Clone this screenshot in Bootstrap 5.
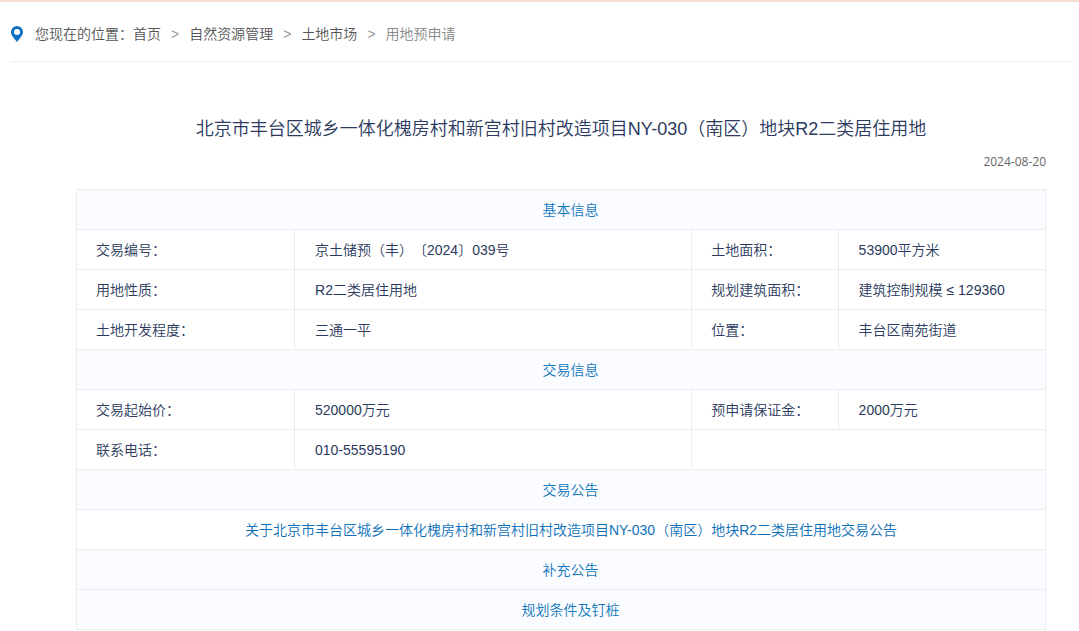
<!DOCTYPE html>
<html lang="zh-CN">
<head>
<meta charset="utf-8">
<meta name="viewport" content="width=device-width, initial-scale=1">
<title>用地预申请</title>
<link href="https://cdn.jsdelivr.net/npm/bootstrap@5.3.0/dist/css/bootstrap.min.css" rel="stylesheet">
<style>
  body { font-family: "Liberation Sans", "Noto Sans CJK SC", sans-serif; font-size: 14px; font-weight: 350; line-height: 20px; text-spacing-trim: space-all; color: #2b3a5e; background: #fff; }
  .top-band { height: 2px; background: #f6dbd2; }
  .page-wrap { padding: 0 8px 0 11px; }
  .location-bar { height: 60px; padding: 10px 0 5px; border-bottom: 1px solid #eee; color: #555; }
  .location-bar a { color: #555; }
  .location-bar .pin { margin-right: 12px; }
  .crumbs { --bs-breadcrumb-item-padding-x: 10px; --bs-breadcrumb-divider: ">"; --bs-breadcrumb-divider-color: #999; --bs-breadcrumb-item-active-color: #888; font-size: 14px; }
  .article { padding: 55px 25px 0 65px; }
  .article h1 { font-size: 18px; font-weight: 350; line-height: 24px; margin-bottom: 12px; }
  .pub-date { font-family: "Open Sans", "Noto Sans", sans-serif; font-size: 12px; font-weight: 400; line-height: 18px; color: #666; margin-bottom: 18px; }
  .info { --bs-table-color: #2b3a5e; --bs-table-bg: transparent; --bs-table-border-color: #ececee; table-layout: fixed; border-collapse: collapse; color: #2b3a5e; }
  .info > tbody > tr > * { height: 40px; padding: 0 0 0 20px; font-weight: 350; vertical-align: middle; }
  .info > tbody > tr > th { padding-left: 19px; }
  .info a { color: #0d6fb8; }
  .info > tbody > tr.section > th { background: #fafcff; color: #1277bd; text-align: center; }
  .c1 { width: 22.5%; } .c2 { width: 41%; } .c3 { width: 15.1%; }
</style>
</head>
<body>
<div class="top-band"></div>
<div class="page-wrap">
  <nav class="location-bar d-flex align-items-center" aria-label="breadcrumb">
    <svg class="pin" width="12" height="16" viewBox="0 0 12 16" aria-hidden="true"><path fill="#0d70c0" fill-rule="evenodd" d="M6 0a6 6 0 0 0-6 6c0 3.500 3.500 6.500 6 10 2.500-3.500 6-6.500 6-10a6 6 0 0 0-6-6Zm0 3a3 3 0 1 1 0 6 3 3 0 0 1 0-6Z"/></svg>
    <span>您现在的位置：</span>
    <ol class="breadcrumb crumbs mb-0">
      <li class="breadcrumb-item"><a class="text-decoration-none" href="#">首页</a></li>
      <li class="breadcrumb-item"><a class="text-decoration-none" href="#">自然资源管理</a></li>
      <li class="breadcrumb-item"><a class="text-decoration-none" href="#">土地市场</a></li>
      <li class="breadcrumb-item active" aria-current="page">用地预申请</li>
    </ol>
  </nav>
  <main class="article">
    <h1 class="text-center">北京市丰台区城乡一体化槐房村和新宫村旧村改造项目NY-030（南区）地块R2二类居住用地</h1>
    <div class="pub-date text-end">2024-08-20</div>
    <table class="table table-bordered info mb-0">
      <colgroup><col class="c1"><col class="c2"><col class="c3"><col></colgroup>
      <tbody>
        <tr class="section"><th colspan="4">基本信息</th></tr>
        <tr><th scope="row">交易编号：</th><td>京土储预（丰）〔2024〕039号</td><th scope="row">土地面积：</th><td>53900平方米</td></tr>
        <tr><th scope="row">用地性质：</th><td>R2二类居住用地</td><th scope="row">规划建筑面积：</th><td>建筑控制规模 ≤ 129360</td></tr>
        <tr><th scope="row">土地开发程度：</th><td>三通一平</td><th scope="row">位置：</th><td>丰台区南苑街道</td></tr>
        <tr class="section"><th colspan="4">交易信息</th></tr>
        <tr><th scope="row">交易起始价：</th><td>520000万元</td><th scope="row">预申请保证金：</th><td>2000万元</td></tr>
        <tr><th scope="row">联系电话：</th><td>010-55595190</td><td colspan="2"></td></tr>
        <tr class="section"><th colspan="4">交易公告</th></tr>
        <tr><td colspan="4" class="text-center"><a class="text-decoration-none" href="#">关于北京市丰台区城乡一体化槐房村和新宫村旧村改造项目NY-030（南区）地块R2二类居住用地交易公告</a></td></tr>
        <tr class="section"><th colspan="4">补充公告</th></tr>
        <tr class="section"><th colspan="4">规划条件及钉桩</th></tr>
      </tbody>
    </table>
  </main>
</div>
<script src="https://cdn.jsdelivr.net/npm/bootstrap@5.3.0/dist/js/bootstrap.bundle.min.js"></script>
</body>
</html>
